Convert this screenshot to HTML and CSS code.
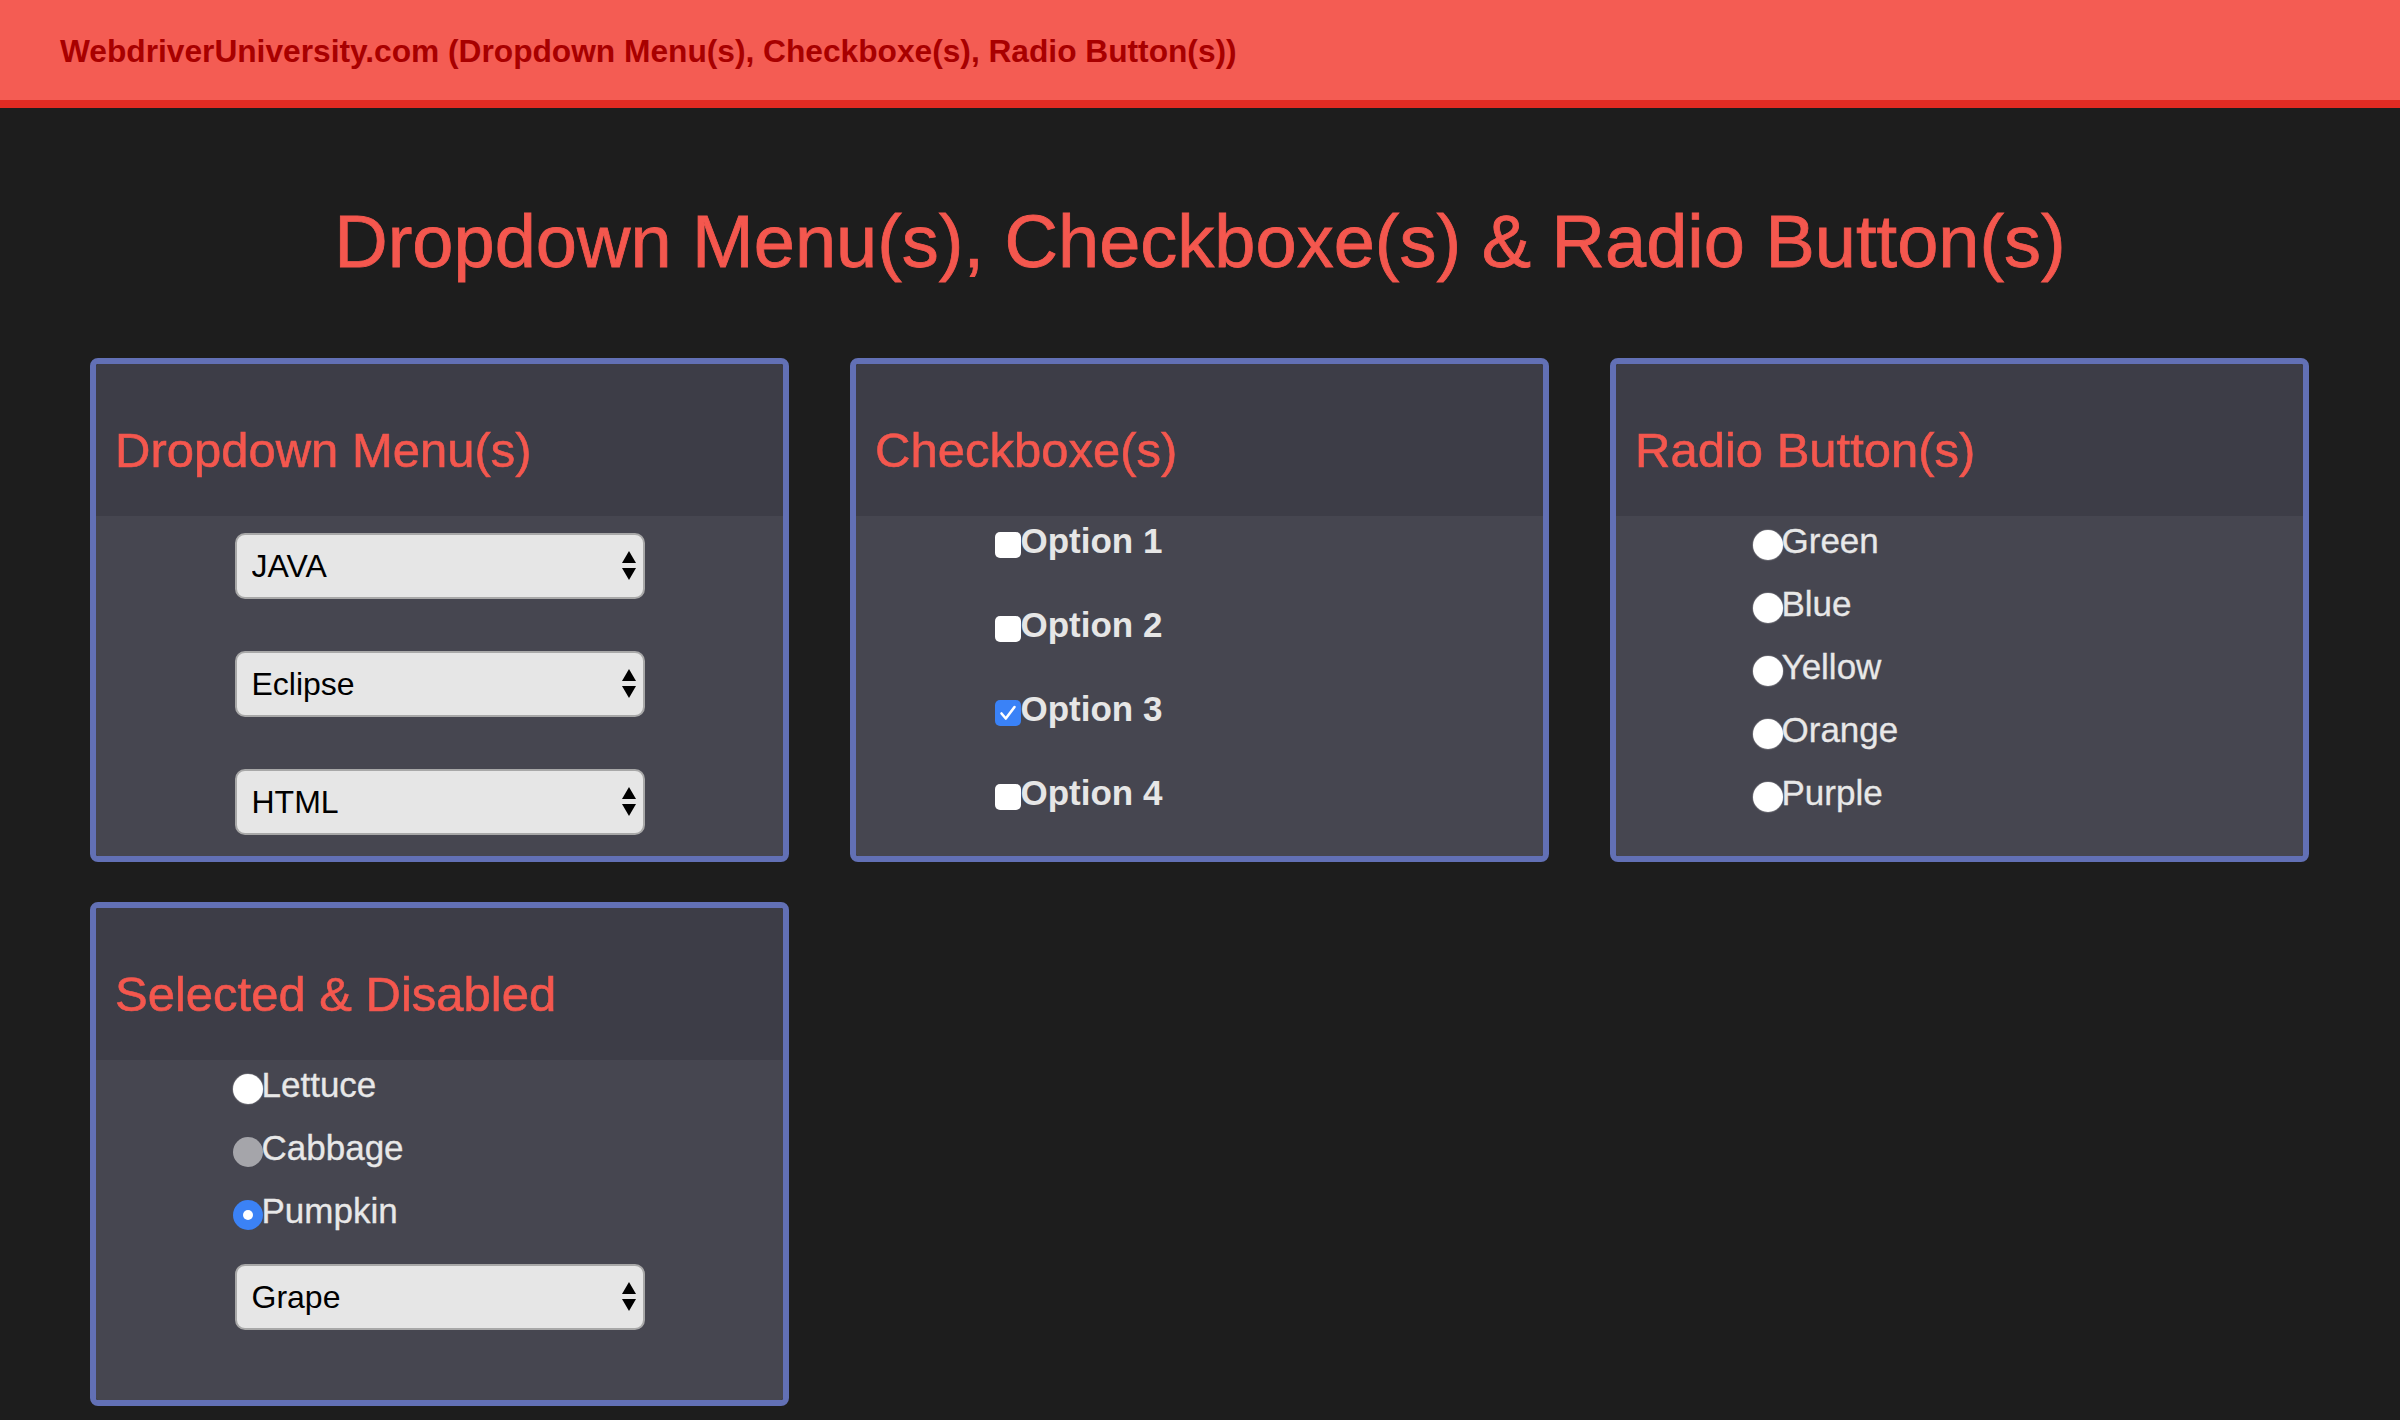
FILE: index.html
```html
<!DOCTYPE html>
<html lang="en">
<head>
<meta charset="utf-8">
<title>WebDriver | Dropdown Menu(s) | Checkboxe(s) | Radio Button(s)</title>
<link rel="stylesheet" href="styles.css">
</head>
<body>
<nav class="navbar">
  <span class="brand">WebdriverUniversity.com (Dropdown Menu(s), Checkboxe(s), Radio Button(s))</span>
</nav>

<h1 class="page-title">Dropdown Menu(s), Checkboxe(s) &amp; Radio Button(s)</h1>

<main class="grid">
  <section class="panel">
    <div class="panel-head"><h2 class="panel-title">Dropdown Menu(s)</h2></div>
    <div class="panel-body body-selects">
      <div class="form">
        <div class="select-wrap">
          <select class="select"><option>JAVA</option></select>
          <svg class="arrows" viewBox="0 0 14 29" width="14" height="29"><polygon points="7,0 14,12 0,12"/><polygon points="0,17 14,17 7,29"/></svg>
        </div>
        <div class="select-wrap">
          <select class="select"><option>Eclipse</option></select>
          <svg class="arrows" viewBox="0 0 14 29" width="14" height="29"><polygon points="7,0 14,12 0,12"/><polygon points="0,17 14,17 7,29"/></svg>
        </div>
        <div class="select-wrap">
          <select class="select"><option>HTML</option></select>
          <svg class="arrows" viewBox="0 0 14 29" width="14" height="29"><polygon points="7,0 14,12 0,12"/><polygon points="0,17 14,17 7,29"/></svg>
        </div>
      </div>
    </div>
  </section>

  <section class="panel">
    <div class="panel-head"><h2 class="panel-title">Checkboxe(s)</h2></div>
    <div class="panel-body body-list">
      <div class="form">
        <div class="check-row"><span class="checkbox"></span>Option 1</div>
        <div class="check-row"><span class="checkbox"></span>Option 2</div>
        <div class="check-row"><span class="checkbox checked"><svg viewBox="0 0 26 26" width="26" height="26"><path d="M6.5 13.5 L10.8 18.5 L19.5 7" fill="none" stroke="#fff" stroke-width="2.6" stroke-linecap="round" stroke-linejoin="round"/></svg></span>Option 3</div>
        <div class="check-row"><span class="checkbox"></span>Option 4</div>
      </div>
    </div>
  </section>

  <section class="panel">
    <div class="panel-head"><h2 class="panel-title">Radio Button(s)</h2></div>
    <div class="panel-body body-list">
      <div class="form">
        <div class="radio-row"><span class="radio"></span>Green</div>
        <div class="radio-row"><span class="radio"></span>Blue</div>
        <div class="radio-row"><span class="radio"></span>Yellow</div>
        <div class="radio-row"><span class="radio"></span>Orange</div>
        <div class="radio-row"><span class="radio"></span>Purple</div>
      </div>
    </div>
  </section>

  <section class="panel">
    <div class="panel-head"><h2 class="panel-title">Selected &amp; Disabled</h2></div>
    <div class="panel-body body-mixed">
      <div class="form">
        <div class="radio-row"><span class="radio"></span>Lettuce</div>
        <div class="radio-row"><span class="radio disabled"></span>Cabbage</div>
        <div class="radio-row"><span class="radio selected"></span>Pumpkin</div>
        <div class="select-wrap mixed-select">
          <select class="select"><option>Grape</option></select>
          <svg class="arrows" viewBox="0 0 14 29" width="14" height="29"><polygon points="7,0 14,12 0,12"/><polygon points="0,17 14,17 7,29"/></svg>
        </div>
      </div>
    </div>
  </section>
</main>
</body>
</html>
```

FILE: styles.css
```css
* {
  box-sizing: border-box;
}

html, body {
  margin: 0;
  padding: 0;
}

body {
  background: #1d1d1d;
  font-family: "Liberation Sans", Arial, Helvetica, sans-serif;
  width: 2400px;
  min-height: 1420px;
}

.navbar {
  height: 108px;
  background: #f45c53;
  border-bottom: 8px solid #e22b23;
  padding: 33px 0 0 60px;
}

.brand {
  font-weight: bold;
  font-size: 31.7px;
  color: #a80000;
  line-height: normal;
}

.page-title {
  margin: 91px 0 74px;
  text-align: center;
  font-weight: normal;
  font-size: 74px;
  line-height: normal;
  color: #f4574e;
  -webkit-text-stroke: 0.8px #f4574e;
}

.grid {
  display: grid;
  grid-template-columns: repeat(3, 1fr);
  column-gap: 61px;
  row-gap: 40px;
  padding: 0 91px 0 90px;
}

.panel {
  border: 6px solid #6270b5;
  border-radius: 8px;
  display: flex;
  flex-direction: column;
  overflow: hidden;
}

.panel-head {
  height: 152px;
  background: #3d3d47;
  padding: 58px 0 0 19px;
}

.panel-title {
  margin: 0;
  font-weight: normal;
  font-size: 49px;
  line-height: normal;
  color: #f4574e;
  -webkit-text-stroke: 0.6px #f4574e;
}

.panel-body {
  flex: 1;
  background: #464650;
}

.form {
  width: 410px;
  margin: 0 auto;
}

.body-selects {
  padding: 17px 0 21px;
}

.body-list {
  padding: 5px 0 43px;
}

.body-mixed {
  padding: 5px 0 70px;
}

.select-wrap {
  position: relative;
  width: 410px;
  height: 66px;
  margin-bottom: 52px;
}

.select-wrap:last-child {
  margin-bottom: 0;
}

.mixed-select {
  margin-top: 33px;
}

.select {
  -webkit-appearance: none;
  appearance: none;
  display: block;
  width: 410px;
  height: 66px;
  margin: 0;
  padding: 0 40px 0 15px;
  background: #e6e6e6;
  border: 2px solid #a8a8a8;
  border-radius: 10px;
  font-family: "Liberation Sans", Arial, Helvetica, sans-serif;
  font-size: 32px;
  color: #000;
}

.arrows {
  position: absolute;
  right: 9px;
  top: 18px;
  fill: #000;
}

.check-row {
  height: 40px;
  line-height: 40px;
  margin-bottom: 44px;
  font-weight: bold;
  font-size: 35px;
  color: #e6e6e6;
  white-space: nowrap;
}

.check-row:last-child {
  margin-bottom: 0;
}

.checkbox {
  display: inline-block;
  width: 26px;
  height: 26px;
  background: #fff;
  border-radius: 5px;
  vertical-align: -5px;
}

.checkbox svg {
  display: block;
}

.checkbox.checked {
  background: #3a82f7;
}

.radio-row {
  height: 40px;
  line-height: 40px;
  margin-bottom: 23px;
  font-size: 35px;
  color: #e8e8e8;
  white-space: nowrap;
  -webkit-text-stroke: 0.3px #e8e8e8;
}

.radio-row:last-child {
  margin-bottom: 0;
}

.radio {
  display: inline-block;
  width: 30px;
  height: 30px;
  margin-left: -2px;
  margin-right: -1px;
  border-radius: 50%;
  background: #fff;
  box-shadow: 0 0 1px 0.5px rgba(255, 255, 255, 0.35);
  vertical-align: -7px;
  position: relative;
}

.radio.disabled {
  background: #a5a5aa;
  box-shadow: none;
}

.radio.selected {
  background: #3b82f6;
  box-shadow: none;
}

.radio.selected::after {
  content: "";
  position: absolute;
  left: 10px;
  top: 10px;
  width: 10px;
  height: 10px;
  border-radius: 50%;
  background: #fff;
}
```
